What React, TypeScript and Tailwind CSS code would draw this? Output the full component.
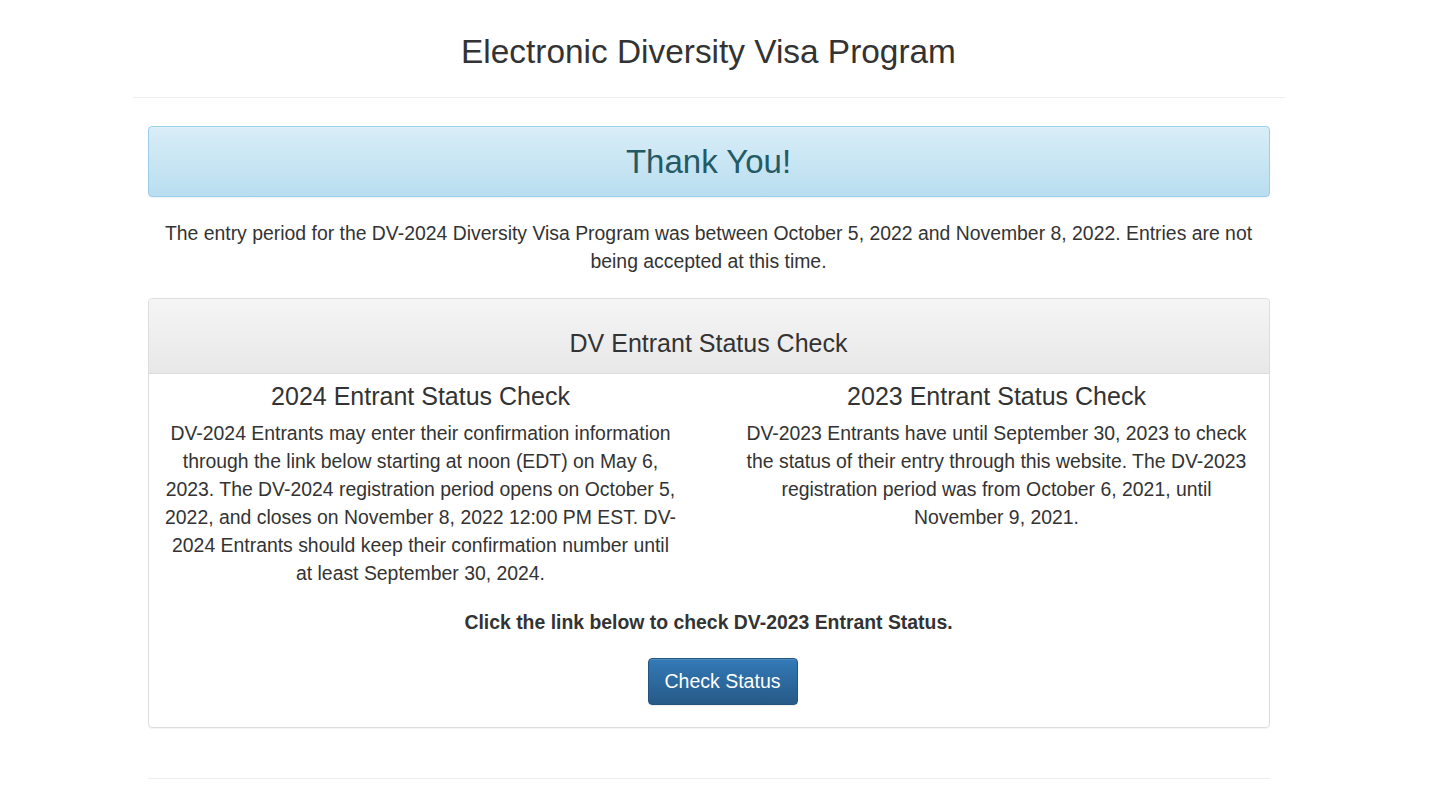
export default function App() {
  return (
    <div className="min-h-screen w-[1417px] bg-white font-['Liberation_Sans',Arial,sans-serif] text-[#333]">
      {/* Page header */}
      <div className="mx-auto w-[1152px] border-b border-[#eee] pt-[34px] pb-[27px]">
        <h1 className="text-center text-[33.4px] leading-[36px] font-normal">Electronic Diversity Visa Program</h1>
      </div>

      <div className="mx-auto w-[1122px]">
        {/* Thank you alert */}
        <div className="mt-[28px] flex h-[71px] items-center justify-center rounded-[4px] border border-[#9acfea] bg-gradient-to-b from-[#d9edf7] to-[#b9def0] shadow-[inset_0_1px_0_rgba(255,255,255,0.25),0_1px_2px_rgba(0,0,0,0.05)]">
          <h2 className="text-[33px] leading-[36px] text-[#245a64]">Thank You!</h2>
        </div>

        <p className="mt-[22px] text-center text-[19.4px] leading-[28px]">
          The entry period for the DV-2024 Diversity Visa Program was between October 5, 2022 and November 8, 2022. Entries are not being accepted at this time.
        </p>

        {/* Status check panel */}
        <div className="mt-[23px] rounded-[4px] border border-[#ddd] shadow-[0_1px_1px_rgba(0,0,0,0.05)]">
          <div className="rounded-t-[4px] border-b border-[#ddd] bg-gradient-to-b from-[#f5f5f5] to-[#e8e8e8] pt-[30px] pb-[16px]">
            <h3 className="text-center text-[25px] leading-[28px]">DV Entrant Status Check</h3>
          </div>

          <div className="pt-[8px] pb-[22px]">
            <div className="grid grid-cols-[516px_516px] gap-[60px] px-[14px]">
              <div className="text-center">
                <h4 className="text-[25px] leading-[28px]">2024 Entrant Status Check</h4>
                <p className="mt-[9px] text-[19.4px] leading-[28px]">
                  DV-2024 Entrants may enter their confirmation information through the link below starting at noon (EDT) on May 6, 2023. The DV-2024 registration period opens on October 5, 2022, and closes on November 8, 2022 12:00 PM EST. DV-2024 Entrants should keep their confirmation number until at least September 30, 2024.
                </p>
              </div>
              <div className="text-center">
                <h4 className="text-[25px] leading-[28px]">2023 Entrant Status Check</h4>
                <p className="mt-[9px] text-[19.4px] leading-[28px]">
                  DV-2023 Entrants have until September 30, 2023 to check the status of their entry through this website. The DV-2023 registration period was from October 6, 2021, until November 9, 2021.
                </p>
              </div>
            </div>

            <p className="mt-[21px] text-center text-[19.4px] leading-[28px] font-bold">
              Click the link below to check DV-2023 Entrant Status.
            </p>

            <div className="mt-[22px] flex justify-center">
              <button className="ml-[28px] h-[47px] w-[150px] rounded-[4px] border border-[#245580] bg-gradient-to-b from-[#337ab7] to-[#265a88] text-[19.5px] text-white shadow-[inset_0_1px_0_rgba(255,255,255,0.15),0_1px_1px_rgba(0,0,0,0.075)]">
                Check Status
              </button>
            </div>
          </div>
        </div>

        <div className="mt-[50px] border-t border-[#eee]" />
      </div>
    </div>
  )
}
